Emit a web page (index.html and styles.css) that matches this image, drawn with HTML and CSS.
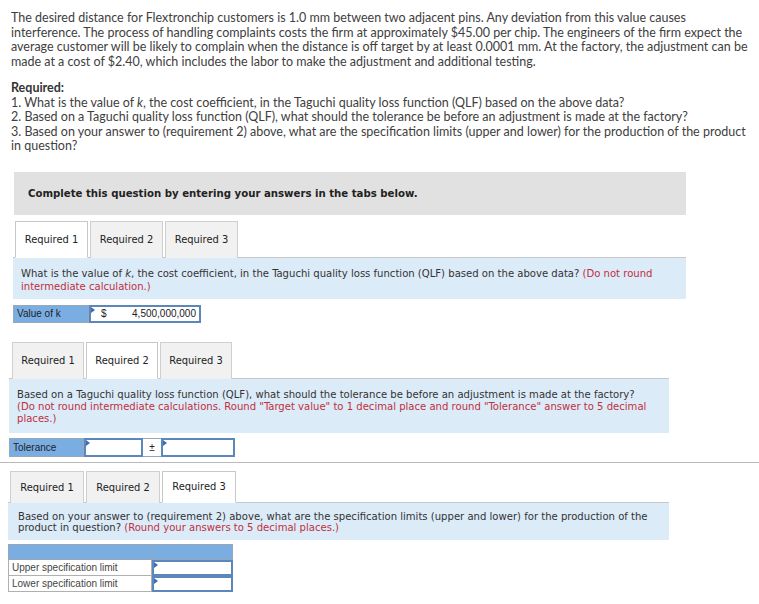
FILE: index.html
```html
<!DOCTYPE html>
<html>
<head>
<meta charset="utf-8">
<link rel="stylesheet" href="styles.css">
</head>
<body>
<div class="intro">
  <p class="para">The desired distance for Flextronchip customers is 1.0 mm between two adjacent pins. Any deviation from this value causes interference. The process of handling complaints costs the firm at approximately $45.00 per chip. The engineers of the firm expect the average customer will be likely to complain when the distance is off target by at least 0.0001 mm. At the factory, the adjustment can be made at a cost of $2.40, which includes the labor to make the adjustment and additional testing.</p>
  <div class="required">
    <div class="req-title">Required:</div>
    <div>1. What is the value of <i>k</i>, the cost coefficient, in the Taguchi quality loss function (QLF) based on the above data?</div>
    <div>2. Based on a Taguchi quality loss function (QLF), what should the tolerance be before an adjustment is made at the factory?</div>
    <div>3. Based on your answer to (requirement 2) above, what are the specification limits (upper and lower) for the production of the product in question?</div>
  </div>
</div>

<div class="banner">Complete this question by entering your answers in the tabs below.</div>

<section class="sec sec1">
  <div class="tabs">
    <div class="tab active">Required 1</div>
    <div class="tab">Required 2</div>
    <div class="tab">Required 3</div>
  </div>
  <div class="panel">What is the value of <i>k</i>, the cost coefficient, in the Taguchi quality loss function (QLF) based on the above data? <span class="red">(Do not round intermediate calculation.)</span></div>
  <div class="row">
    <div class="label lbl-k">Value of k</div>
    <div class="input inp-k"><span class="flag"></span><span class="cur">$</span><span class="val">4,500,000,000</span></div>
  </div>
</section>

<section class="sec sec2">
  <div class="tabs">
    <div class="tab">Required 1</div>
    <div class="tab active">Required 2</div>
    <div class="tab">Required 3</div>
  </div>
  <div class="panel">Based on a Taguchi quality loss function (QLF), what should the tolerance be before an adjustment is made at the factory? <span class="red">(Do not round intermediate calculations. Round "Target value" to 1 decimal place and round "Tolerance" answer to 5 decimal places.)</span></div>
  <div class="row">
    <div class="label lbl-tol">Tolerance</div>
    <div class="input inp-t1"><span class="flag"></span></div>
    <div class="pm">±</div>
    <div class="input inp-t2"><span class="flag"></span></div>
  </div>
</section>

<section class="sec sec3">
  <div class="tabs">
    <div class="tab">Required 1</div>
    <div class="tab">Required 2</div>
    <div class="tab active">Required 3</div>
  </div>
  <div class="panel">Based on your answer to (requirement 2) above, what are the specification limits (upper and lower) for the production of the product in question? <span class="red">(Round your answers to 5 decimal places.)</span></div>
  <div class="spec">
    <div class="spec-head"><div class="sh1"></div><div class="sh2"></div></div>
    <div class="spec-row"><div class="spec-lbl">Upper specification limit</div><div class="input spec-inp"><span class="flag"></span></div></div>
    <div class="spec-row"><div class="spec-lbl">Lower specification limit</div><div class="input spec-inp"><span class="flag"></span></div></div>
  </div>
</section>
</body>
</html>
```

FILE: styles.css
```css
html, body {
  margin: 0;
  padding: 0;
  background: #fff;
}
body {
  width: 759px;
  height: 604px;
  overflow: hidden;
  color: #3a3a3a;
}
.intro {
  font-family: Lato, "Open Sans", sans-serif;
  font-size: 12.5px;
  line-height: 14.5px;
  padding: 11px 5px 0 11px;
  width: 743px;
  color: #404040;
}
.para {
  margin: 0;
}
.required {
  margin-top: 12px;
}
.req-title {
  font-weight: bold;
  color: #333;
}
.banner {
  margin: 18px 0 0 14px;
  width: 672px;
  height: 43px;
  background: #e1e1e1;
  box-sizing: border-box;
  padding-left: 14px;
  display: flex;
  align-items: center;
  font-family: "DejaVu Sans Condensed", "DejaVu Sans", sans-serif;
  font-weight: bold;
  font-size: 11.3px;
  color: #222;
}
.sec {
  font-family: "DejaVu Sans Condensed", "DejaVu Sans", sans-serif;
  font-size: 11px;
  color: #222;
}
.tabs {
  display: flex;
  gap: 2px;
  border-bottom: 1px solid #c8c8c8;
}
.tab {
  box-sizing: border-box;
  width: 73px;
  background: #f1f1f1;
  border: 1px solid #cfcfcf;
  border-bottom: none;
  display: flex;
  align-items: center;
  justify-content: center;
  margin-bottom: -1px;
  color: #222;
}
.tab.active {
  background: #fff;
  border-color: #c8c8c8;
  border-bottom: 1px solid #fff;
}
.panel {
  background: #dcebf8;
  color: #333;
  font-size: 11.2px;
}
.red {
  color: #c0303e;
}
.row {
  display: flex;
  font-family: "Liberation Sans", Arial, sans-serif;
  font-size: 10px;
  color: #222;
}
.label {
  box-sizing: border-box;
  background: #7aaee3;
  border: 1px solid #9aa7b4;
  display: flex;
  align-items: center;
  padding-left: 3px;
}
.input {
  position: relative;
  box-sizing: border-box;
  background: #fff;
  border: 2px solid #5d86bd;
  display: flex;
  align-items: center;
}
.flag {
  position: absolute;
  left: 0;
  top: 0;
  width: 0;
  height: 0;
  border-top: 3px solid transparent;
  border-bottom: 3px solid transparent;
  border-left: 4px solid #3a6fb8;
}

/* section 1 */
.sec1 {
  margin-top: 6px;
}
.sec1 .tabs {
  margin-left: 13px;
  width: 673px;
  padding-left: 2px;
  box-sizing: border-box;
}
.sec1 .tab {
  height: 37px;
}
.sec1 .panel {
  margin-left: 13px;
  width: 673px;
  box-sizing: border-box;
  padding: 9px 8px 6px 8px;
  line-height: 13px;
}
.sec1 .row {
  margin: 6px 0 0 13px;
  height: 18px;
}
.lbl-k {
  width: 76px;
}
.inp-k {
  width: 112px;
  padding: 0 3px 0 10px;
  justify-content: space-between;
}

/* section 2 */
.sec2 {
  margin-top: 19px;
}
.sec2 .tabs {
  margin-left: 9px;
  width: 660px;
  padding-left: 3px;
  box-sizing: border-box;
}
.sec2 .tab {
  height: 37px;
  width: 72px;
}
.sec2 .panel {
  margin-left: 9px;
  width: 660px;
  box-sizing: border-box;
  padding: 10px 6px 8px 8px;
  line-height: 12px;
}
.sec2 .red {
  display: block;
}
.sec2 .row {
  margin: 5px 0 0 9px;
  height: 19px;
}
.lbl-tol {
  width: 75px;
}
.inp-t1 {
  width: 59px;
}
.pm {
  width: 18px;
  box-sizing: border-box;
  border-top: 1px solid #9aa7b4;
  border-bottom: 1px solid #9aa7b4;
  display: flex;
  align-items: center;
  justify-content: center;
  background: #fff;
}
.inp-t2 {
  width: 74px;
}

/* section 3 */
.sec3 {
  margin-top: 5px;
  border-top: 1px solid #b9b9b9;
  padding-top: 8px;
}
.sec3 .tabs {
  margin-left: 8px;
  width: 661px;
  padding-left: 2px;
  box-sizing: border-box;
}
.sec3 .tab {
  height: 32px;
  width: 74px;
}
.sec3 .panel {
  margin-left: 8px;
  width: 661px;
  box-sizing: border-box;
  padding: 8px 6px 6px 10px;
  line-height: 11.5px;
}
.spec {
  margin: 4px 0 0 8px;
  width: 225px;
  font-family: "Liberation Sans", Arial, sans-serif;
  font-size: 10px;
  color: #444;
}
.spec-head {
  display: flex;
  height: 16px;
  background: #7aaee3;
  border: 1px solid #9aa7b4;
  box-sizing: border-box;
}
.sh1 {
  width: 142px;
  border-right: 1px solid #9aa7b4;
}
.spec-row {
  display: flex;
  height: 16px;
}
.spec-lbl {
  width: 144px;
  box-sizing: border-box;
  border: 1px solid #b0b0b0;
  border-top: none;
  padding-left: 3px;
  display: flex;
  align-items: center;
}
.spec-inp {
  width: 81px;
}
```
